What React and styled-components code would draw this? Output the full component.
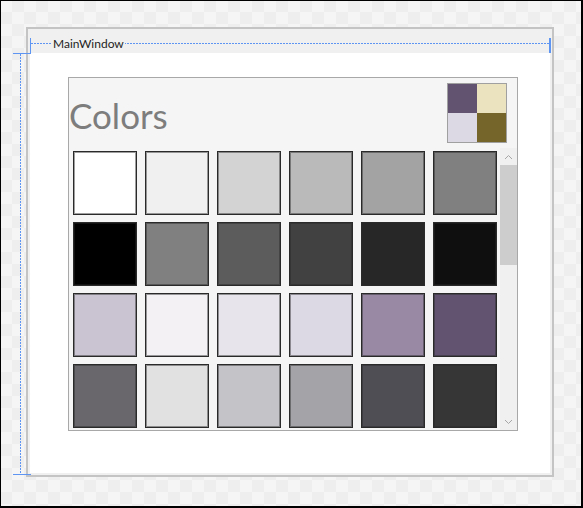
import styled, { createGlobalStyle } from "styled-components";

const GlobalStyle = createGlobalStyle`
  html, body {
    margin: 0;
    padding: 0;
  }
  body {
    font-family: "Lato", "Noto Sans", sans-serif;
  }
`;

const Stage = styled.div`
  position: relative;
  box-sizing: border-box;
  width: 583px;
  height: 508px;
  border: 1px solid #000;
  border-right-width: 2px;
  border-bottom-width: 2px;
  padding: 26px 0 0 25px;
  background-color: #f5f5f5;
  background-image: conic-gradient(#eeeeee 25%, transparent 0 50%, #eeeeee 0 75%, transparent 0);
  background-size: 24px 24px;
  background-position: -1px -1px;
`;

const Window = styled.div`
  box-sizing: border-box;
  width: 528px;
  height: 450px;
  border: 2px solid #c4c4c4;
  background: #f0f0f0;
  padding: 0 2px 2px 2px;
  display: flex;
  flex-direction: column;
`;

const TitleBar = styled.div`
  height: 24px;
  display: flex;
  align-items: center;
`;

const TitleText = styled.span`
  position: relative;
  z-index: 1;
  margin-left: 22px;
  padding: 0 1px;
  background: #f0f0f0;
  font-size: 12px;
  color: #1e1e1e;
  margin-top: -5px;
`;

const Client = styled.div`
  flex: 1;
  background: #fff;
  padding: 24px 0 0 38px;
`;

const Panel = styled.div`
  box-sizing: border-box;
  width: 450px;
  height: 354px;
  border: 1px solid #a8a8a8;
  background: #f5f5f5;
  display: flex;
  flex-direction: column;
`;

const Header = styled.div`
  height: 70px;
  display: flex;
  align-items: center;
  justify-content: space-between;
  padding: 0 10px 0 0;
`;

const Heading = styled.h1`
  margin: 3px 0 0 0;
  font-family: "Lato", "Noto Sans", sans-serif;
  font-weight: 400;
  font-size: 35px;
  color: #7d7d7d;
`;

const Preview = styled.div`
  box-sizing: border-box;
  width: 60px;
  height: 60px;
  border: 1px solid #a0a0a0;
  display: grid;
  grid-template-columns: 1fr 1fr;
  grid-template-rows: 1fr 1fr;
`;

const Quad = styled.div`
  background: ${(p) => p.$c};
`;

const Body = styled.div`
  flex: 1;
  display: flex;
  min-height: 0;
`;

const Viewport = styled.div`
  flex: 1;
  overflow: hidden;
`;

const Grid = styled.div`
  display: grid;
  grid-template-columns: repeat(6, 64px);
  grid-auto-rows: 64px;
  column-gap: 8px;
  row-gap: 7px;
  padding: 3px 0 0 4px;
`;

const Cell = styled.div`
  box-sizing: border-box;
  border: 1px solid #2a2a2a;
  box-shadow: inset 0 0 0 1px rgba(40, 40, 40, 0.45);
  background: ${(p) => p.$c};
`;

const ScrollBar = styled.div`
  width: 17px;
  background: #f0f0f0;
  display: flex;
  flex-direction: column;
`;

const ArrowBtn = styled.div`
  height: 17px;
  display: flex;
  align-items: center;
  justify-content: center;
`;

const Track = styled.div`
  flex: 1;
`;

const Thumb = styled.div`
  height: 100px;
  background: #cdcdcd;
`;

const BLUE = "#5f95f2";

const Adorner = styled.div`
  position: absolute;
  left: ${(p) => p.$x}px;
  top: ${(p) => p.$y}px;
  width: ${(p) => p.$w}px;
  height: ${(p) => p.$h}px;
  background: ${(p) =>
    p.$dotted
      ? `repeating-linear-gradient(${p.$w > p.$h ? "90deg" : "180deg"}, ${BLUE} 0 2px, transparent 2px 3px)`
      : BLUE};
  z-index: ${(p) => (p.$dotted ? 0 : 2)};
`;

const TitleLayer = styled.div`
  position: relative;
`;

const rows = [
  ["#ffffff", "#f0f0f0", "#d3d3d3", "#bababa", "#a3a3a3", "#808080"],
  ["#000000", "#808080", "#5c5c5c", "#414141", "#272727", "#0f0f0f"],
  ["#c9c3d2", "#f3f1f4", "#e7e5eb", "#dcd8e4", "#9a89a4", "#625470"],
  ["#69676c", "#e1e1e2", "#c4c3c7", "#a4a3a7", "#4f4e54", "#363637"],
];

function Chevron({ up }) {
  return (
    <svg width="9" height="6" viewBox="0 0 9 6">
      <polyline
        points={up ? "1,5 4.5,1.5 8,5" : "1,1 4.5,4.5 8,1"}
        fill="none"
        stroke="#a6a6a6"
        strokeWidth="1"
      />
    </svg>
  );
}

export default function App() {
  return (
    <>
      <GlobalStyle />
      <Stage>
        <Window>
          <TitleBar>
            <TitleLayer>
              <TitleText>MainWindow</TitleText>
            </TitleLayer>
          </TitleBar>
          <Client>
            <Panel>
              <Header>
                <Heading>Colors</Heading>
                <Preview>
                  <Quad $c="#625470" />
                  <Quad $c="#ebe3c0" />
                  <Quad $c="#dcd8e4" />
                  <Quad $c="#76652a" />
                </Preview>
              </Header>
              <Body>
                <Viewport>
                  <Grid>
                    {rows.flat().map((c, i) => (
                      <Cell key={i} $c={c} />
                    ))}
                  </Grid>
                </Viewport>
                <ScrollBar>
                  <ArrowBtn>
                    <Chevron up />
                  </ArrowBtn>
                  <Track>
                    <Thumb />
                  </Track>
                  <ArrowBtn>
                    <Chevron />
                  </ArrowBtn>
                </ScrollBar>
              </Body>
            </Panel>
          </Client>
        </Window>

        {/* designer adorners */}
        <Adorner $dotted $x={30} $y={42} $w={518} $h={1} />
        <Adorner $x={29} $y={37} $w={1} $h={16} />
        <Adorner $x={548} $y={37} $w={2} $h={15} />
        <Adorner $x={12} $y={52} $w={18} $h={1} />
        <Adorner $dotted $x={19} $y={53} $w={1} $h={420} />
        <Adorner $x={12} $y={473} $w={18} $h={1} />
      </Stage>
    </>
  );
}
